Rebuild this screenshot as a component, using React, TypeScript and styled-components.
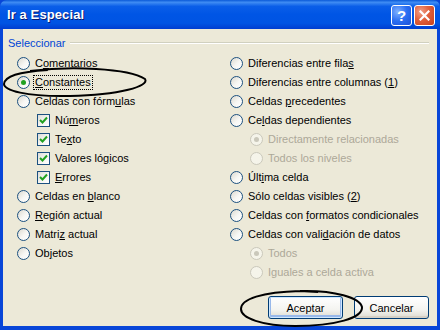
import React from "react";
import styled, { createGlobalStyle } from "styled-components";

const GlobalStyle = createGlobalStyle`
  html, body { margin: 0; padding: 0; background: #ffffff; }
  body { font-family: "Liberation Sans", Arial, sans-serif; }
`;

type Option = {
  label: React.ReactNode;
  kind: "radio" | "check";
  checked?: boolean;
  disabled?: boolean;
  indent?: boolean;
  focus?: boolean;
};

const u = (before: string, key: string, after: string) => (
  <>
    {before}
    <u>{key}</u>
    {after}
  </>
);

const leftOptions: Option[] = [
  { kind: "radio", label: u("C", "o", "mentarios") },
  { kind: "radio", label: u("", "C", "onstantes"), checked: true, focus: true },
  { kind: "radio", label: u("Celdas con fórm", "u", "las") },
  { kind: "check", label: u("Nú", "m", "eros"), checked: true, indent: true },
  { kind: "check", label: u("Te", "x", "to"), checked: true, indent: true },
  { kind: "check", label: u("Valores ló", "g", "icos"), checked: true, indent: true },
  { kind: "check", label: u("", "E", "rrores"), checked: true, indent: true },
  { kind: "radio", label: u("Celdas en ", "b", "lanco") },
  { kind: "radio", label: u("", "R", "egión actual") },
  { kind: "radio", label: u("Matri", "z", " actual") },
  { kind: "radio", label: u("Ob", "j", "etos") },
];

const rightOptions: Option[] = [
  { kind: "radio", label: u("Diferencias entre fila", "s", "") },
  { kind: "radio", label: u("Diferencias entre columnas (", "1", ")") },
  { kind: "radio", label: u("Celdas ", "p", "recedentes") },
  { kind: "radio", label: u("Ce", "l", "das dependientes") },
  { kind: "radio", label: "Directamente relacionadas", checked: true, disabled: true, indent: true },
  { kind: "radio", label: "Todos los niveles", disabled: true, indent: true },
  { kind: "radio", label: u("Últ", "i", "ma celda") },
  { kind: "radio", label: u("Sólo celdas visibles (", "2", ")") },
  { kind: "radio", label: u("Celdas con ", "f", "ormatos condicionales") },
  { kind: "radio", label: u("Celdas con vali", "d", "ación de datos") },
  { kind: "radio", label: "Todos", checked: true, disabled: true, indent: true },
  { kind: "radio", label: "Iguales a celda activa", disabled: true, indent: true },
];

export default function App() {
  return (
    <>
      <GlobalStyle />
      <Window>
        <TitleBar>
          <Title>Ir a Especial</Title>
          <CaptionButtons>
            <CaptionButton $kind="help">?</CaptionButton>
            <CaptionButton $kind="close">
              <svg width="11" height="11" viewBox="0 0 11 11">
                <path d="M1.5 1.5 L9.5 9.5 M9.5 1.5 L1.5 9.5" stroke="#fff" strokeWidth="2.2" strokeLinecap="square" />
              </svg>
            </CaptionButton>
          </CaptionButtons>
        </TitleBar>
        <Body>
          <GroupHeader>
            <Legend>Seleccionar</Legend>
            <Rule />
          </GroupHeader>
          <Columns>
            <Column>
              {leftOptions.map((o, i) => (
                <OptionRow key={i} option={o} />
              ))}
            </Column>
            <Column>
              {rightOptions.map((o, i) => (
                <OptionRow key={i} option={o} />
              ))}
            </Column>
          </Columns>
          <Footer>
            <PushButton $default>Aceptar</PushButton>
            <PushButton>Cancelar</PushButton>
          </Footer>
          <Annotation viewBox="0 0 440 330" width="440" height="330">
            <path
              d="M30 71 C 70 66, 128 68, 145 79 C 150 86, 120 95, 70 96 C 25 97, 4 90, 4 84 C 5 76, 18 72, 48 70"
              fill="none"
              stroke="#000"
              strokeWidth="2"
            />
            <path
              d="M300 291 C 335 290, 360 298, 362 307 C 363 318, 335 326, 295 326 C 262 326, 241 318, 241 309 C 241 299, 262 292, 300 291 L 318 292"
              fill="none"
              stroke="#000"
              strokeWidth="2"
            />
          </Annotation>
        </Body>
      </Window>
    </>
  );
}

function OptionRow({ option }: { option: Option }) {
  return (
    <Row $indent={!!option.indent} $disabled={!!option.disabled}>
      {option.kind === "radio" ? (
        <RadioMark $disabled={!!option.disabled}>{option.checked && <RadioDot $disabled={!!option.disabled} />}</RadioMark>
      ) : (
        <CheckMark>
          {option.checked && (
            <svg width="9" height="9" viewBox="0 0 9 9">
              <path d="M1 4 L3.5 6.5 L8 1.5" stroke="#21a121" strokeWidth="2" fill="none" />
            </svg>
          )}
        </CheckMark>
      )}
      <Label $focus={!!option.focus}>{option.label}</Label>
    </Row>
  );
}

const Window = styled.div`
  position: relative;
  width: 440px;
  height: 330px;
  display: flex;
  flex-direction: column;
  background: #0846d8;
  overflow: hidden;
`;

const TitleBar = styled.div`
  height: 29px;
  flex: none;
  display: flex;
  align-items: center;
  justify-content: space-between;
  padding: 0 5px 0 7px;
  background: linear-gradient(
    to bottom,
    #0a5ad8 0%,
    #3f8cf3 8%,
    #0a5ee8 22%,
    #0055e5 50%,
    #0054e3 80%,
    #003dd0 100%
  );
  border-radius: 7px 7px 0 0;
`;

const Title = styled.div`
  color: #ffffff;
  font-weight: bold;
  font-size: 13px;
  letter-spacing: 0.1px;
  text-shadow: 1px 1px 0 #0a1a6e;
`;

const CaptionButtons = styled.div`
  display: flex;
  gap: 2px;
  margin-top: 1px;
`;

const CaptionButton = styled.div<{ $kind: "help" | "close" }>`
  width: 21px;
  height: 21px;
  box-sizing: border-box;
  border: 1px solid #ffffff;
  border-radius: 3px;
  display: flex;
  align-items: center;
  justify-content: center;
  color: #ffffff;
  font-weight: bold;
  font-size: 15px;
  background: ${(p) =>
    p.$kind === "close"
      ? "radial-gradient(circle at 30% 30%, #f1a088 0%, #e0603c 45%, #c8401c 100%)"
      : "radial-gradient(circle at 30% 30%, #7fb1ff 0%, #2a6ef2 50%, #1c50d8 100%)"};
`;

const Body = styled.div`
  position: relative;
  flex: 1;
  margin: 0 3px 4px 3px;
  background: #ece9d8;
  display: flex;
  flex-direction: column;
  padding: 7px 8px 0 5px;
`;

const GroupHeader = styled.div`
  display: flex;
  align-items: center;
  gap: 5px;
  height: 14px;
`;

const Legend = styled.span`
  color: #0046d5;
  font-size: 11px;
`;

const Rule = styled.div`
  flex: 1;
  height: 0;
  border-top: 1px solid #d0d0bf;
  border-bottom: 1px solid #ffffff;
`;

const Columns = styled.div`
  display: grid;
  grid-template-columns: 213px 1fr;
  padding: 4px 0 0 9px;
`;

const Column = styled.div`
  display: flex;
  flex-direction: column;
`;

const Row = styled.div<{ $indent: boolean; $disabled: boolean }>`
  height: 19px;
  display: flex;
  align-items: center;
  gap: 4px;
  padding-left: ${(p) => (p.$indent ? 20 : 0)}px;
  font-size: 11px;
  color: ${(p) => (p.$disabled ? "#aca899" : "#000000")};
  white-space: nowrap;
`;

const RadioMark = styled.span<{ $disabled: boolean }>`
  width: 13px;
  height: 13px;
  box-sizing: border-box;
  border-radius: 50%;
  border: 1px solid ${(p) => (p.$disabled ? "#cac8bb" : "#1c5180")};
  background: ${(p) =>
    p.$disabled ? "#f5f4ea" : "linear-gradient(135deg, #dcd9cf 0%, #f7f7f4 55%, #ffffff 100%)"};
  display: flex;
  align-items: center;
  justify-content: center;
  flex: none;
`;

const RadioDot = styled.span<{ $disabled: boolean }>`
  width: 5px;
  height: 5px;
  border-radius: 50%;
  background: ${(p) => (p.$disabled ? "#cac8bb" : "#21a121")};
`;

const CheckMark = styled.span`
  width: 13px;
  height: 13px;
  box-sizing: border-box;
  border: 1px solid #1c5180;
  background: linear-gradient(135deg, #dcdcd7 0%, #f5f5f2 55%, #ffffff 100%);
  display: flex;
  align-items: center;
  justify-content: center;
  flex: none;
`;

const Label = styled.span<{ $focus: boolean }>`
  padding: 0 1px;
  outline: ${(p) => (p.$focus ? "1px dotted #000" : "none")};
  line-height: 13px;
`;

const Footer = styled.div`
  display: flex;
  justify-content: flex-end;
  gap: 11px;
  margin-top: auto;
  padding: 0 0 7px 0;
`;

const PushButton = styled.div<{ $default?: boolean }>`
  width: 75px;
  height: 23px;
  box-sizing: border-box;
  border: 1px solid #003c74;
  border-radius: 3px;
  display: flex;
  align-items: center;
  justify-content: center;
  font-size: 11px;
  color: #000;
  background: linear-gradient(to bottom, #ffffff 0%, #f4f4f0 60%, #dcdad0 100%);
  box-shadow: ${(p) =>
    p.$default ? "inset 0 0 0 1px #cee7ff, inset 0 -1px 0 2px #98b8ea" : "inset 0 -2px 0 #d6d0c5"};
`;

const Annotation = styled.svg`
  position: absolute;
  left: -3px;
  top: -29px;
  pointer-events: none;
`;
